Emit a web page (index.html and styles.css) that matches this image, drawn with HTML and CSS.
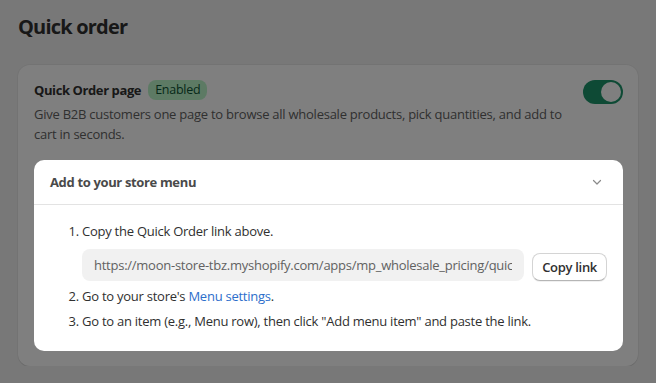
FILE: index.html
```html
<!DOCTYPE html>
<html lang="en">
<head>
    <meta charset="UTF-8">
    <meta name="viewport" content="width=device-width, initial-scale=1.0">
    <title>Quick order</title>
    <link rel="stylesheet" href="styles.css">
</head>
<body>
    <div class="page">
        <h1 class="page-title">Quick order</h1>

        <section class="card">
            <div class="card-head">
                <div class="card-info">
                    <div class="title-row">
                        <h2 class="card-title">Quick Order page</h2>
                        <span class="badge">Enabled</span>
                    </div>
                    <p class="card-desc">Give B2B customers one page to browse all wholesale products, pick quantities, and add to cart in seconds.</p>
                </div>
                <span class="toggle"><span class="knob"></span></span>
            </div>

            <div class="menu-card">
                <div class="menu-head">
                    <span class="menu-title">Add to your store menu</span>
                    <svg class="chevron" width="12" height="12" viewBox="0 0 12 12" fill="none">
                        <path d="M2.5 4.5 L6 8 L9.5 4.5" stroke="#8a8a8a" stroke-width="1.2" stroke-linecap="round" stroke-linejoin="round"/>
                    </svg>
                </div>
                <div class="menu-body">
                    <ol class="steps">
                        <li>
                            Copy the Quick Order link above.
                            <div class="link-row">
                                <input type="text" class="link-field" readonly value="https://moon-store-tbz.myshopify.com/apps/mp_wholesale_pricing/quick-order">
                                <button type="button" class="copy-btn">Copy link</button>
                            </div>
                        </li>
                        <li>Go to your store's <a href="#" class="link">Menu settings</a>.</li>
                        <li>Go to an item (e.g., Menu row), then click "Add menu item" and paste the link.</li>
                    </ol>
                </div>
            </div>
        </section>
    </div>

    <!-- dimmed backdrop of the guided tour, the menu card sits above it -->
    <div class="overlay"></div>
</body>
</html>
```

FILE: styles.css
```css
body {
    margin: 0;
    font-family: "Open Sans", "Noto Sans", sans-serif;
    font-size: 13px;
    letter-spacing: -0.25px;
    color: #303030;
    background-color: #f1f1f1;
}
.page {
    padding: 15px 18px 0 18px;
}
.page-title {
    margin: 0 0 26px 0;
    font-size: 20px;
    line-height: 24px;
    font-weight: 700;
    letter-spacing: -0.8px;
    color: #303030;
}
.card {
    background-color: #fff;
    border-radius: 12px;
    padding: 15px 15px 15px 16px;
    box-shadow: 0 1px 0 rgba(0, 0, 0, 0.08), 0 0 0 1px rgba(0, 0, 0, 0.04);
}
.card-head {
    display: flex;
    align-items: flex-start;
    gap: 16px;
}
.card-info {
    flex: 1;
}
.title-row {
    display: flex;
    align-items: center;
    gap: 7px;
}
.card-title {
    margin: 0;
    font-size: 13px;
    line-height: 20px;
    font-weight: 700;
    letter-spacing: -0.4px;
}
.badge {
    display: inline-block;
    padding: 0 7px;
    line-height: 20px;
    border-radius: 8px;
    background-color: #bbf5c9;
    color: #0c5132;
    font-size: 12.5px;
}
.card-desc {
    margin: 4px 0 0 0;
    line-height: 20px;
    color: #616161;
}
.toggle {
    width: 40px;
    height: 24px;
    border-radius: 12px;
    background-color: #1c946a;
    display: flex;
    align-items: center;
    justify-content: flex-end;
    padding: 0 2px;
    box-sizing: border-box;
}
.knob {
    width: 20px;
    height: 20px;
    border-radius: 50%;
    background-color: #fff;
}
.menu-card {
    position: relative;
    z-index: 20;
    margin-top: 16px;
    background-color: #fff;
    border-radius: 10px;
}
.menu-head {
    display: flex;
    align-items: center;
    justify-content: space-between;
    padding: 12px 20px 12px 16px;
    border-bottom: 1px solid #e3e3e3;
}
.menu-title {
    font-weight: 700;
    line-height: 20px;
    letter-spacing: -0.35px;
    color: #4a4a4a;
}
.menu-body {
    padding: 16px 16px 20px 16px;
}
.steps {
    margin: 0;
    padding-left: 32px;
    color: #303030;
}
.steps li {
    line-height: 20px;
    margin-bottom: 5px;
}
.steps li:last-child {
    margin-bottom: 0;
}
.link-row {
    display: flex;
    align-items: flex-end;
    gap: 8px;
    margin-top: 8px;
}
.link-field {
    flex: 1;
    min-width: 0;
    height: 32px;
    padding: 0 12px;
    box-sizing: border-box;
    font-family: inherit;
    font-size: 13px;
    letter-spacing: -0.25px;
    background-color: #f1f1f1;
    border: none;
    border-radius: 8px;
    color: #616161;
    outline: none;
}
.copy-btn {
    height: 28px;
    padding: 0 9px;
    font-family: inherit;
    font-size: 13px;
    font-weight: 600;
    letter-spacing: -0.3px;
    color: #303030;
    background-color: #fff;
    border: 1px solid #d4d4d4;
    border-bottom-color: #b5b5b5;
    border-radius: 8px;
    box-shadow: 0 1px 0 rgba(0, 0, 0, 0.06);
    cursor: pointer;
}
.link {
    color: #2c6ecb;
    text-decoration: none;
}
.overlay {
    position: fixed;
    top: 0;
    left: 0;
    right: 0;
    bottom: 0;
    z-index: 10;
    background-color: rgba(0, 0, 0, 0.5);
}
```
